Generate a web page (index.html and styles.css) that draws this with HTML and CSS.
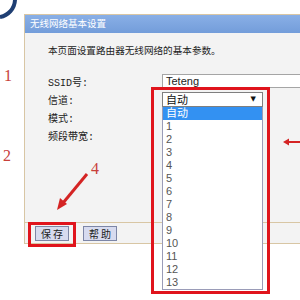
FILE: index.html
```html
<!DOCTYPE html>
<html lang="zh-CN">
<head>
    <meta charset="UTF-8">
    <title>无线网络基本设置</title>
    <link rel="stylesheet" href="styles.css">
</head>
<body>
<div class="page">
    <!-- corner of the router logo -->
    <svg class="logo-edge" width="20" height="22" viewBox="0 0 20 22">
        <path d="M15 0 A 18 18 0 0 1 0 17" fill="none" stroke="#1f3f73" stroke-width="4"/>
    </svg>

    <!-- annotations -->
    <span class="mark mark-1">1</span>
    <span class="mark mark-2">2</span>
    <span class="mark mark-4">4</span>
    <svg class="arrow-down" width="45" height="50" viewBox="0 0 45 50">
        <line x1="37" y1="9" x2="13" y2="38" stroke="#d42424" stroke-width="3"/>
        <polygon points="7,45 10,33 17,39" fill="#d42424"/>
    </svg>
    <svg class="arrow-left" width="20" height="12" viewBox="0 0 20 12">
        <line x1="20" y1="6" x2="8" y2="6" stroke="#d42424" stroke-width="2"/>
        <polygon points="3,6 9,2.5 9,9.5" fill="#d42424"/>
    </svg>

    <div class="panel">
        <div class="panel-title">无线网络基本设置</div>
        <div class="panel-body">
            <p class="intro">本页面设置路由器无线网络的基本参数。</p>
            <div class="row">
                <span class="label">SSID号:</span>
                <div class="text-field">Teteng</div>
            </div>
            <div class="row">
                <span class="label">信道:</span>
                <div class="select-wrap">
                    <div class="select">自动<span class="caret">▼</span></div>
                    <ul class="options">
                        <li class="active">自动</li>
                        <li>1</li>
                        <li>2</li>
                        <li>3</li>
                        <li>4</li>
                        <li>5</li>
                        <li>6</li>
                        <li>7</li>
                        <li>8</li>
                        <li>9</li>
                        <li>10</li>
                        <li>11</li>
                        <li>12</li>
                        <li>13</li>
                    </ul>
                    <div class="highlight-box"></div>
                </div>
            </div>
            <div class="row">
                <span class="label">模式:</span>
            </div>
            <div class="row">
                <span class="label">频段带宽:</span>
            </div>
        </div>
        <div class="panel-foot">
            <span class="btn-wrap">
                <button class="btn">保 存</button>
                <span class="highlight-box"></span>
            </span>
            <button class="btn">帮 助</button>
        </div>
    </div>
</div>
</body>
</html>
```

FILE: styles.css
```css
body {
    margin: 0;
    background-color: #fff;
    font-family: "Liberation Sans", "Noto Sans CJK SC", sans-serif;
    overflow: hidden;
}
.page {
    position: relative;
    width: 300px;
    height: 300px;
    padding-top: 14px;
    box-sizing: border-box;
    overflow: hidden;
}
.logo-edge {
    position: absolute;
    left: 0;
    top: 0;
}
.panel {
    margin-left: 24px;
    width: 320px;
    border: 1px solid #d8c6a4;
    border-right: none;
}
.panel-title {
    height: 18px;
    line-height: 18px;
    padding-left: 5px;
    font-size: 9.5px;
    color: #fff;
    background: linear-gradient(#89afe6, #739dda);
}
.panel-body {
    height: 189px;
    padding: 11px 0 0 23px;
    box-sizing: border-box;
    background-color: #f3f3f3;
}
.intro {
    margin: 0 0 14px;
    font-size: 9.6px;
    line-height: 14px;
    color: #222;
}
.row {
    display: flex;
    align-items: center;
    height: 18px;
}
.label {
    width: 114px;
    flex-shrink: 0;
    font-family: "Liberation Mono", "Noto Sans CJK SC", monospace;
    font-size: 10px;
    color: #222;
}
.text-field {
    flex: 1;
    height: 12px;
    line-height: 12px;
    padding-left: 3px;
    font-size: 11px;
    color: #222;
    background-color: #fff;
    border: 1px solid #a5a5a5;
}
.select-wrap {
    position: relative;
    z-index: 2;
    width: 101px;
}
.select {
    display: flex;
    justify-content: space-between;
    align-items: center;
    height: 13px;
    padding: 0 6px 0 3px;
    font-size: 11px;
    color: #111;
    background-color: #fff;
    border: 1px solid #7f7f7f;
}
.caret {
    font-family: "DejaVu Sans", sans-serif;
    font-size: 7px;
}
.options {
    position: absolute;
    top: 100%;
    left: 0;
    width: 101px;
    box-sizing: border-box;
    margin: 0;
    padding: 0;
    list-style: none;
    background-color: #fff;
    border: 1px solid #9a9cb8;
    border-top: none;
}
.options li {
    height: 13px;
    line-height: 13px;
    padding-left: 3px;
    font-size: 11px;
    color: #555;
}
.options li.active {
    background-color: #3391f2;
    color: #fff;
}
.highlight-box {
    position: absolute;
    box-sizing: border-box;
    border: 3px solid #e0141c;
}
.select-wrap .highlight-box {
    left: -11px;
    top: -5px;
    width: 119px;
    height: 207px;
}
.panel-foot {
    display: flex;
    align-items: center;
    gap: 14px;
    height: 20px;
    padding-left: 10px;
    background-color: #f3f3f3;
    border-top: 1px solid #d8c6a4;
}
.btn-wrap {
    position: relative;
    display: flex;
}
.btn-wrap .highlight-box {
    left: -7px;
    top: -4px;
    width: 48px;
    height: 25px;
}
.btn {
    width: 34px;
    height: 15px;
    padding: 0;
    font-family: "Noto Sans CJK SC", sans-serif;
    font-size: 10px;
    line-height: 13px;
    color: #222;
    background-color: #d7dbef;
    border: 1px solid #7d86a6;
}
.mark {
    position: absolute;
    font-family: "Liberation Serif", serif;
    font-size: 16px;
    line-height: 1;
    color: #c8403a;
}
.mark-1 {
    left: 4px;
    top: 68px;
}
.mark-2 {
    left: 3px;
    top: 148px;
}
.mark-4 {
    left: 91px;
    top: 161px;
}
.arrow-down {
    position: absolute;
    left: 50px;
    top: 165px;
}
.arrow-left {
    position: absolute;
    left: 280px;
    top: 136px;
}
```
